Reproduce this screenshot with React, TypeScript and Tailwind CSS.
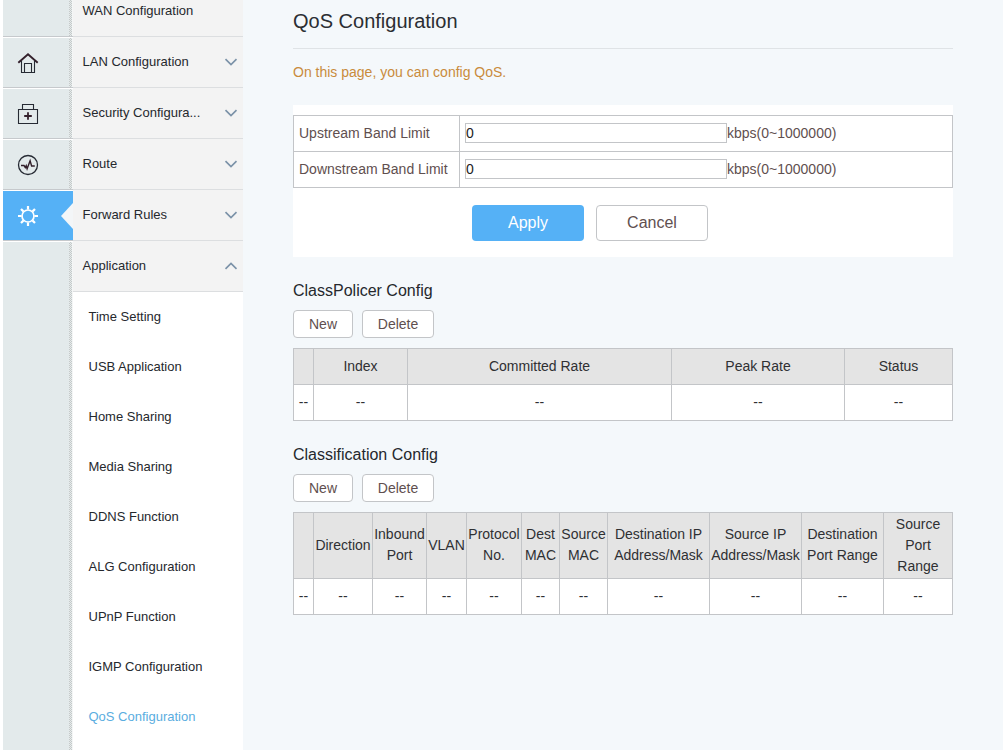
import React from "react";

const menu = [
  { label: "WAN Configuration" },
  { label: "LAN Configuration", arrow: "down" },
  { label: "Security Configura...", arrow: "down" },
  { label: "Route", arrow: "down" },
  { label: "Forward Rules", arrow: "down" },
  { label: "Application", arrow: "up" },
];

const subMenu = [
  "Time Setting",
  "USB Application",
  "Home Sharing",
  "Media Sharing",
  "DDNS Function",
  "ALG Configuration",
  "UPnP Function",
  "IGMP Configuration",
  "QoS Configuration",
];

function HomeIcon() {
  return (
    <svg width="22" height="22" viewBox="0 0 22 22" fill="none" stroke="#262a33">
      <path d="M1.300 10.700 11 2.200l9.700 8.500" stroke="#33202b" strokeWidth="1.900" />
      <path d="M4.500 9v11.500h13V9M7.500 20.500V11.500h7v9" strokeWidth="1.100" />
    </svg>
  );
}

function KitIcon() {
  return (
    <svg width="22" height="22" viewBox="0 0 22 22" fill="none" stroke="#262a33">
      <path d="M1.500 6.500h19v14h-19zM5.500 6.500v-5h11v5" strokeWidth="1.100" />
      <path d="M11 9.200v7.600M7.200 13h7.600" stroke="#33202b" strokeWidth="1.800" />
    </svg>
  );
}

function PulseIcon() {
  return (
    <svg width="22" height="22" viewBox="0 0 22 22" fill="none" stroke="#262a33">
      <circle cx="11" cy="11" r="9.500" strokeWidth="1.300" />
      <path d="M4 11.500h3l1.300 2 .9-1.800.9 3 3-8 1.500 5.300h3.200" stroke="#33202b" strokeWidth="1.400" />
    </svg>
  );
}

function GearIcon() {
  return (
    <svg width="22" height="22" viewBox="0 0 22 22" fill="none" stroke="#fff">
      <circle cx="11" cy="11" r="6" strokeWidth="1.700" />
      <path
        d="M11 1v3.500M11 17.500V21M1 11h3.500M17.500 11H21M4 4l2.400 2.400M15.600 15.600 18 18M18 4l-2.400 2.400M6.400 15.600 4 18"
        strokeWidth="2.200"
      />
    </svg>
  );
}

function Chevron({ up }: { up: boolean }) {
  return (
    <svg className="mb-px" width="14" height="8" viewBox="0 0 14 8" fill="none" stroke="#7b92a8" strokeWidth="1.700">
      <path d={up ? "M1.500 6.800 7 1.500l5.500 5.300" : "M1.500 1.200 7 6.500l5.500-5.300"} />
    </svg>
  );
}

function RailDots() {
  return (
    <div className="h-full w-[4px] shrink-0 border-r border-[#f4f6f6] bg-[#e6ebeb] bg-[conic-gradient(#c4c9c9_25%,#e6ebeb_0_50%,#c4c9c9_0_75%,#e6ebeb_0)] bg-[length:2px_2px]" />
  );
}

function RailCell({ children }: { children?: React.ReactNode }) {
  return (
    <div className="flex h-[51px] shrink-0 border-t border-b border-t-white border-b-[#c6c9cc]">
      <div className="flex flex-1 items-center pl-[14px]">{children}</div>
      <RailDots />
    </div>
  );
}

function SmallButton({ children, className }: { children: string; className: string }) {
  return (
    <button className={`h-7 rounded border border-[#c3c5c8] bg-white text-sm leading-none text-[#5f4f4f] ${className}`}>
      {children}
    </button>
  );
}

function LimitRow({ label }: { label: string }) {
  return (
    <tr className="h-9 bg-white">
      <td className="w-[166px] border border-[#c3c5c8] pl-[5px]">{label}</td>
      <td className="border border-[#c3c5c8] pl-[5px]">
        <div className="flex items-start">
          <input
            defaultValue="0"
            className="h-5 w-[262px] border border-[#c3c5c8] bg-white text-sm leading-none text-[#222] outline-none"
          />
          <span>kbps(0~1000000)</span>
        </div>
      </td>
    </tr>
  );
}

function DataTable({ heads, widths, headHeight }: { heads: string[]; widths: number[]; headHeight: string }) {
  return (
    <table className="w-[660px] table-fixed border-collapse text-center text-sm leading-[21px] text-[#2f3033]">
      <colgroup>
        {widths.map((w, i) => (
          <col key={i} style={{ width: w }} />
        ))}
      </colgroup>
      <thead>
        <tr className={`${headHeight} bg-[#e4e4e4]`}>
          {heads.map((h, i) => (
            <th
              key={i}
              className={`border border-[#c3c5c8] p-0 font-normal whitespace-pre-line ${h.split("\n").length === 2 ? "pb-[2px]" : ""}`}
            >
              {h}
            </th>
          ))}
        </tr>
      </thead>
      <tbody>
        <tr className="h-9 bg-white">
          {heads.map((_, i) => (
            <td key={i} className="border border-[#c3c5c8] p-0">
              --
            </td>
          ))}
        </tr>
      </tbody>
    </table>
  );
}

export default function App() {
  return (
    <div className="flex h-[750px] w-[1004px] overflow-hidden bg-white pr-px pl-[3px] font-['Liberation_Sans',Arial,sans-serif]">
      <aside className="flex w-[70px] shrink-0 flex-col bg-[#e3eaeb]">
        <div className="flex h-[37px] shrink-0 justify-end border-b border-[#c6c9cc]">
          <RailDots />
        </div>
        <RailCell>
          <HomeIcon />
        </RailCell>
        <RailCell>
          <KitIcon />
        </RailCell>
        <RailCell>
          <PulseIcon />
        </RailCell>
        <div className="flex h-[51px] shrink-0 items-center justify-between border-t border-b border-t-white border-b-[#c6c9cc] bg-[#55b1f6] pl-[14px]">
          <GearIcon />
          <svg width="12" height="26" viewBox="0 0 12 26">
            <path d="M12 0v26L0 13z" fill="#f3f6f8" />
          </svg>
        </div>
        <div className="flex flex-1 justify-end border-t border-white">
          <RailDots />
        </div>
      </aside>

      <nav className="-mt-[14px] flex w-[170px] shrink-0 flex-col text-[13px] text-[#25282d]">
        {menu.map((m) => (
          <div
            key={m.label}
            className="flex h-[51px] shrink-0 items-center justify-between border-b border-[#dcdee0] bg-[#f3f3f3] pr-[5px] pl-[9.500px]"
          >
            <span>{m.label}</span>
            {m.arrow && <Chevron up={m.arrow === "up"} />}
          </div>
        ))}
        {subMenu.map((s) => (
          <div
            key={s}
            className={`flex h-[50px] shrink-0 items-center pl-[15.500px] ${s === "QoS Configuration" ? "text-[#5aade0]" : ""}`}
          >
            {s}
          </div>
        ))}
      </nav>

      <main className="flex-1 bg-[#f4f8fb] pl-[50px]">
        <div className="w-[660px]">
          <h1 className="h-[49px] border-b border-[#dfe3e6] pt-[6px] text-xl leading-[30px] text-[#2b2e33]">
            QoS Configuration
          </h1>
          <p className="mt-[13px] text-sm leading-[21px] text-[#c98b3c]">On this page, you can config QoS.</p>

          <section className="mt-[22px] h-[152px] bg-white pt-[10px]">
            <table className="w-full table-fixed border-collapse text-sm leading-[21px] text-[#5f4f4f]">
              <tbody>
                <LimitRow label="Upstream Band Limit" />
                <LimitRow label="Downstream Band Limit" />
              </tbody>
            </table>
            <div className="mt-[17px] flex gap-3 pl-[179px]">
              <button className="h-9 w-28 rounded bg-[#55b1f6] text-base leading-none text-white">Apply</button>
              <button className="h-9 w-28 rounded border border-[#c3c5c8] bg-white text-base leading-none text-[#5f4f4f]">
                Cancel
              </button>
            </div>
          </section>

          <section className="mt-[22px]">
            <h2 className="text-base leading-6 text-[#25282d]">ClassPolicer Config</h2>
            <div className="mt-[7px] mb-[10px] flex gap-[9px]">
              <SmallButton className="w-[60px]">New</SmallButton>
              <SmallButton className="w-[72px]">Delete</SmallButton>
            </div>
            <DataTable
              heads={["", "Index", "Committed Rate", "Peak Rate", "Status"]}
              widths={[20, 94, 264, 173, 108]}
              headHeight="h-9"
            />
          </section>

          <section className="mt-[22px]">
            <h2 className="text-base leading-6 text-[#25282d]">Classification Config</h2>
            <div className="mt-[7px] mb-[10px] flex gap-[9px]">
              <SmallButton className="w-[60px]">New</SmallButton>
              <SmallButton className="w-[72px]">Delete</SmallButton>
            </div>
            <DataTable
              heads={[
                "",
                "Direction",
                "Inbound\nPort",
                "VLAN",
                "Protocol\nNo.",
                "Dest\nMAC",
                "Source\nMAC",
                "Destination IP\nAddress/Mask",
                "Source IP\nAddress/Mask",
                "Destination\nPort Range",
                "Source\nPort\nRange",
              ]}
              widths={[20, 59, 54, 40, 55, 38, 48, 102, 92, 82, 69]}
              headHeight="h-[66px]"
            />
          </section>
        </div>
      </main>
    </div>
  );
}
